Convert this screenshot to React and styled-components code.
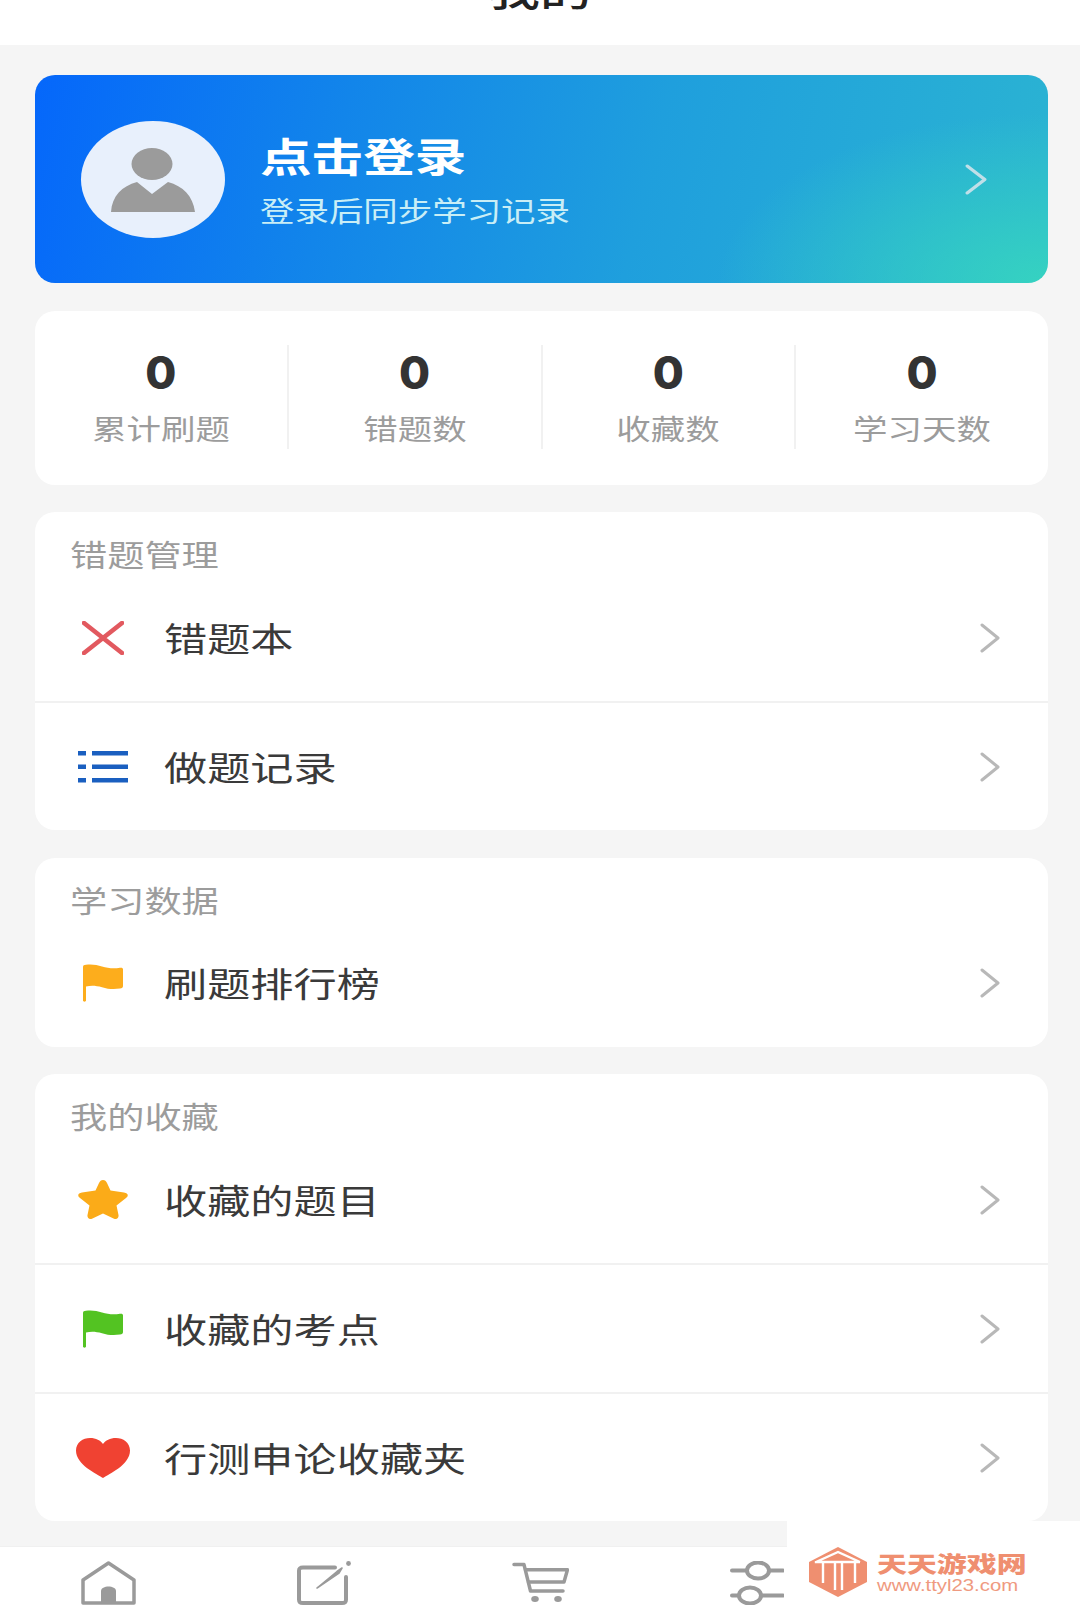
import styled, {createGlobalStyle} from "styled-components"

const CJK = `"Noto Sans CJK SC", "Noto Sans", sans-serif`
// the whole screenshot is stretched sideways, so text is too
const STRETCH = 1.23

const Global = createGlobalStyle`
	html, body {
		margin: 0;
		padding: 0;
		overflow: hidden;
		background: #f5f5f5;
		font-family: ${CJK};
	}
`

const Chevron = ({color = "#b8b8b8", width = 20, height = 30}) => (
	<svg width={width} height={height} viewBox="0 0 20 30" fill="none" preserveAspectRatio="none">
		<path d="M2 2L18 15L2 28" stroke={color} strokeWidth="3" strokeLinecap="round" strokeLinejoin="round" />
	</svg>
)

const CrossIcon = () => (
	<svg width="42" height="34" viewBox="0 0 42 34" fill="none">
		<path d="M2 2L40 32M40 2L2 32" stroke="#e2595f" strokeWidth="4.6" strokeLinecap="round" />
	</svg>
)

const ListIcon = () => (
	<svg width="50" height="32" viewBox="0 0 50 32" fill="#1a5fc0">
		<rect x="0" y="0" width="8" height="4.5" />
		<rect x="14" y="0" width="36" height="4.5" />
		<rect x="0" y="13.5" width="8" height="4.5" />
		<rect x="14" y="13.5" width="36" height="4.5" />
		<rect x="0" y="27" width="8" height="4.5" />
		<rect x="14" y="27" width="36" height="4.5" />
	</svg>
)

const FlagIcon = ({color}) => (
	<svg width="42" height="38" viewBox="0 0 42 38" fill={color}>
		<path d="M1 3C1 1.5 2 1 4 .8C10 0 15 1 20 2.6C26 4.4 32 4.8 38 3.8C40 3.5 41 4 41 5.5V22C41 23.5 40 24.4 38 24.6C31 25.6 26 25 20 23.2C14 21.4 9 21.2 4 22.4V36.5C4 38 1 38 1 36.5Z" />
	</svg>
)

const StarIcon = () => (
	<svg width="50" height="39" viewBox="0 0 50 39" fill="#fbab18">
		<path d="M25 0C27 0 28 1 29 3L32.5 10.5L46 12.4C50 13 51 15.5 48 18L38.5 25.5L40.5 35C41 38.5 38.5 39.8 35.5 38.4L25 33.4L14.5 38.4C11.5 39.8 9 38.5 9.5 35L11.5 25.5L2 18C-1 15.5 0 13 4 12.4L17.5 10.5L21 3C22 1 23 0 25 0Z" />
	</svg>
)

const HeartIcon = () => (
	<svg width="54" height="40" viewBox="0 0 54 40" fill="#f04232">
		<path d="M27 40C21 36 0 27 0 12.5C0 4.5 7 0 14 0C20 0 24.5 2.5 27 6C29.5 2.5 34 0 40 0C47 0 54 4.5 54 12.5C54 27 33 36 27 40Z" />
	</svg>
)

const Person = () => (
	<svg width="84" height="64" viewBox="0 0 84 64" fill="#9b9b9b">
		<ellipse cx="41" cy="16" rx="20.5" ry="16" />
		<path d="M0 64C1 48 11 38 26 34L41 46L57 34C72 38 82 48 84 64Z" />
	</svg>
)

const HomeIcon = () => (
	<svg width="55" height="44" viewBox="0 0 55 44" fill="none" stroke="#9a9a9a" strokeWidth="3.5" strokeLinejoin="round">
		<path d="M2 42V19L27.5 2L53 19V42Z" />
		<path d="M20 42V30C20 24 35 24 35 30V42Z" fill="#9a9a9a" stroke="none" />
	</svg>
)

const EditIcon = () => (
	<svg width="56" height="44" viewBox="0 0 56 44" fill="none" stroke="#9a9a9a" strokeLinecap="round">
		<path d="M39 6.5H7C4 6.5 3 7.5 3 10V38.5C3 41 4 42 7 42H46C49 42 50 41 50 38.5V16" strokeWidth="4" />
		<path d="M21 27L41 10.5L46 7L43 12Z" fill="#9a9a9a" strokeWidth="1.6" strokeLinejoin="round" />
		<circle cx="52.5" cy="2.5" r="2.4" fill="#9a9a9a" stroke="none" />
	</svg>
)

const CartIcon = () => (
	<svg width="57" height="44" viewBox="0 0 57 44" fill="none" stroke="#9a9a9a" strokeWidth="3.5" strokeLinejoin="round" strokeLinecap="round">
		<path d="M2 3.6H12L18.5 30H51" />
		<path d="M13.5 8.7H55.5L52 21H16.5" />
		<ellipse cx="23" cy="38" rx="3.8" ry="3" fill="#9a9a9a" stroke="none" />
		<ellipse cx="46" cy="38" rx="3.8" ry="3" fill="#9a9a9a" stroke="none" />
	</svg>
)

const SlidersIcon = () => (
	<svg width="55" height="44" viewBox="0 0 55 44" fill="none" stroke="#9a9a9a" strokeWidth="4" strokeLinecap="round">
		<path d="M3 9.5H17M41 9.5H54" />
		<ellipse cx="29" cy="9.5" rx="11" ry="8" />
		<path d="M3 34.5H9M32 34.5H54" />
		<ellipse cx="21" cy="34.5" rx="11" ry="8" />
	</svg>
)

const UserIcon = () => (
	<svg width="55" height="44" viewBox="0 0 55 44" fill="none" stroke="#9a9a9a" strokeWidth="4">
		<ellipse cx="27.5" cy="13" rx="14" ry="11" />
		<path d="M3 42C6 30 49 30 52 42" />
	</svg>
)

const WatermarkLogo = () => (
	<svg width="58" height="50" viewBox="0 0 58 50">
		<path d="M29 0L58 15V35L29 50L0 35V15Z" fill="#ef8f70" />
		<path
			d="M7 15L29 5L51 15M7 14V15H51M14 15V36M26 15V43M33 15V43M46 15V36"
			fill="none"
			stroke="#fff"
			strokeWidth="2.4"
		/>
	</svg>
)

const stats = [
	{value: 0, label: "累计刷题"},
	{value: 0, label: "错题数"},
	{value: 0, label: "收藏数"},
	{value: 0, label: "学习天数"},
]

const sections = [
	{
		title: "错题管理",
		rows: [
			{label: "错题本", icon: <CrossIcon />},
			{label: "做题记录", icon: <ListIcon />},
		],
	},
	{
		title: "学习数据",
		rows: [{label: "刷题排行榜", icon: <FlagIcon color="#fdad1c" />}],
	},
	{
		title: "我的收藏",
		rows: [
			{label: "收藏的题目", icon: <StarIcon />},
			{label: "收藏的考点", icon: <FlagIcon color="#53c322" />},
			{label: "行测申论收藏夹", icon: <HeartIcon />},
		],
	},
]

const tabs = [<HomeIcon />, <EditIcon />, <CartIcon />, <SlidersIcon />, <UserIcon />]

const App = () => {
	return (
		<Page>
			<Global />
			<Header>
				<HeaderTitle>我的</HeaderTitle>
			</Header>
			<Content>
				<Banner>
					<Avatar>
						<Person />
					</Avatar>
					<BannerText>
						<BannerTitle>点击登录</BannerTitle>
						<BannerSub>登录后同步学习记录</BannerSub>
					</BannerText>
					<Chevron color="#bfdfe8" width={22} height={31} />
				</Banner>

				<StatsCard>
					{stats.map((item) => (
						<StatItem key={item.label}>
							<StatValue>{item.value}</StatValue>
							<StatLabel>{item.label}</StatLabel>
						</StatItem>
					))}
				</StatsCard>

				{sections.map((section) => (
					<Card key={section.title}>
						<CardTitle>
							<CardTitleText>{section.title}</CardTitleText>
						</CardTitle>
						{section.rows.map((row) => (
							<Row key={row.label}>
								<RowIcon>{row.icon}</RowIcon>
								<RowLabel>{row.label}</RowLabel>
								<Chevron />
							</Row>
						))}
					</Card>
				))}
			</Content>
			<TabBar>
				{tabs.map((icon, i) => (
					<Tab key={i}>{icon}</Tab>
				))}
			</TabBar>
			<Watermark>
				<WatermarkLogo />
				<WatermarkText>
					<WatermarkName>天天游戏网</WatermarkName>
					<WatermarkUrl>www.ttyl23.com</WatermarkUrl>
				</WatermarkText>
			</Watermark>
		</Page>
	)
}

export default App

const Page = styled.main`
	position: relative;
	width: 1080px;
	height: 1613px;
	overflow: hidden;
	display: flex;
	flex-direction: column;
	background: #f5f5f5;
`

const Header = styled.header`
	height: 45px;
	background: #fff;
	display: flex;
	justify-content: center;
	flex: none;
`

const HeaderTitle = styled.h1`
	margin: -29px 0 0;
	height: 38px;
	font-size: 38px;
	line-height: 38px;
	font-weight: 500;
	color: #222;
	transform: scaleX(1.36);
`

const Content = styled.div`
	flex: 1;
	padding: 30px 32px 0 35px;
	display: flex;
	flex-direction: column;
	gap: 27.5px;
`

const Banner = styled.section`
	height: 208px;
	flex: none;
	box-sizing: border-box;
	padding: 0 61px 0 46px;
	border-radius: 20px;
	display: flex;
	align-items: center;
	background:
		radial-gradient(ellipse 330px 170px at 100% 100%, rgba(54, 212, 192, 0.95), rgba(54, 212, 192, 0)),
		linear-gradient(104deg, #0567fb 0%, #1285ea 30%, #1f9fdd 60%, #2bb4d2 100%);
`

const Avatar = styled.div`
	width: 144px;
	height: 117px;
	flex: none;
	border-radius: 50%;
	background: #e8f0fc;
	display: flex;
	align-items: flex-end;
	justify-content: center;
	padding-bottom: 26px;
	box-sizing: border-box;
`

const BannerText = styled.div`
	flex: 1;
	margin: 1px 0 0 35px;
	display: flex;
	flex-direction: column;
	gap: 14px;
`

const BannerTitle = styled.div`
	font-size: 40px;
	line-height: 46px;
	font-weight: 700;
	color: #fff;
	transform: scaleX(1.29);
	transform-origin: left center;
`

const BannerSub = styled.div`
	font-size: 28px;
	line-height: 36px;
	color: #c9eef6;
	transform: scaleX(${STRETCH});
	transform-origin: left center;
`

const StatsCard = styled.section`
	height: 174px;
	flex: none;
	box-sizing: border-box;
	padding: 34px 0 36px;
	border-radius: 20px;
	background: #fff;
	display: flex;
`

const StatItem = styled.div`
	flex: 1;
	display: flex;
	flex-direction: column;
	align-items: center;

	& + & {
		border-left: 2px solid #f1f1f1;
	}
`

const StatValue = styled.div`
	font-family: Inter, "Liberation Sans", sans-serif;
	font-size: 45px;
	line-height: 56px;
	font-weight: 800;
	color: #333;
`

const StatLabel = styled.div`
	margin-top: 8px;
	font-size: 28px;
	line-height: 38px;
	color: #9c9c9c;
	transform: scaleX(${STRETCH});
`

const Card = styled.section`
	flex: none;
	border-radius: 20px;
	background: #fff;
`

const CardTitle = styled.div`
	height: 62px;
	box-sizing: border-box;
	padding: 18px 0 0 35px;
`

const CardTitleText = styled.div`
	font-size: 30px;
	line-height: 46px;
	color: #9c9c9c;
	transform: scaleX(1.24);
	transform-origin: left center;
`

const Row = styled.div`
	height: 127px;
	padding: 0 48px 0 35px;
	display: flex;
	align-items: center;

	& + & {
		border-top: 2px solid #f1f1f1;
	}
`

const RowIcon = styled.div`
	width: 66px;
	flex: none;
	display: flex;
	justify-content: center;
	margin-right: 28px;
`

const RowLabel = styled.div`
	flex: 1;
	font-size: 34px;
	line-height: 46px;
	color: #3a3a3a;
	transform: scaleX(1.27);
	transform-origin: left center;
`

const TabBar = styled.nav`
	height: 66px;
	flex: none;
	background: #fff;
	border-top: 1px solid #f0f0f0;
	display: flex;
	align-items: flex-start;
`

const Tab = styled.div`
	flex: 1;
	display: flex;
	justify-content: center;
	padding-top: 14px;
`

const Watermark = styled.aside`
	position: absolute;
	right: 0;
	bottom: 0;
	width: 293px;
	height: 92px;
	box-sizing: border-box;
	padding: 26px 0 0 22px;
	background: #fff;
	display: flex;
	gap: 10px;
	align-items: flex-start;
`

const WatermarkText = styled.div`
	display: flex;
	flex-direction: column;
	gap: 3px;
	margin-top: 3px;
`

const WatermarkName = styled.div`
	font-size: 22px;
	line-height: 24px;
	font-weight: 900;
	color: #ef8f70;
	transform: scaleX(1.36);
	transform-origin: left center;
`

const WatermarkUrl = styled.div`
	font-family: "Liberation Sans", sans-serif;
	font-size: 16px;
	line-height: 18px;
	color: #ef9a80;
	transform: scaleX(1.27);
	transform-origin: left center;
`
